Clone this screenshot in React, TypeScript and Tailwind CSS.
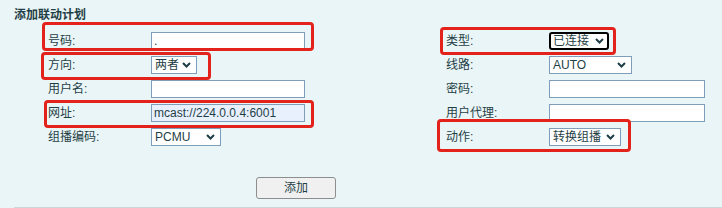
import React from "react";

const font = { fontFamily: '"Liberation Sans", "Noto Sans CJK SC", sans-serif' };

function Chevron() {
  return (
    <svg width="9" height="6" viewBox="0 0 9 6" className="shrink-0">
      <path d="M1 1 L4.5 4.5 L8 1" fill="none" stroke="#1f3f46" strokeWidth="2" />
    </svg>
  );
}

function Select({ value, width, focus }: { value: string; width: string; focus?: boolean }) {
  return (
    <div
      className={`${width} h-[18px] flex items-center justify-between whitespace-nowrap bg-white text-[12px] text-[#1f3f46] ${
        focus ? "border-2 border-black rounded-[3px] pl-[2px] pr-[3px]" : "border border-[#7f9db9] pl-[3px] pr-[5px]"
      }`}
    >
      <span className="leading-none">{value}</span>
      <Chevron />
    </div>
  );
}

function Input({ width, value, filled }: { width: string; value?: string; filled?: boolean }) {
  return (
    <div
      className={`${width} h-[18px] flex items-center border border-[#7f9db9] px-[2px] text-[12px] text-[#1f3f46] whitespace-nowrap ${
        filled ? "bg-[#e8f0fe]" : "bg-white"
      }`}
    >
      {value}
    </div>
  );
}

function Label({ children }: { children: React.ReactNode }) {
  return <div className="text-[12px] text-[#1f3f46] leading-none whitespace-nowrap">{children}</div>;
}

export default function App() {
  return (
    <div className="relative w-[722px] h-[208px] bg-[#eaf5f7] overflow-hidden" style={font}>
      <div className="pl-[14px] pt-[7px] text-[12px] font-bold text-[#1f3f46] leading-[16px]">添加联动计划</div>

      <div className="mt-[6px] pl-[48px] grid grid-cols-[103px_295px_103px_1fr] auto-rows-[24px] items-center">
        <Label>号码:</Label>
        <Input width="w-[154px]" value="." />
        <Label>类型:</Label>
        <Select value="已连接" width="w-[60px]" focus />

        <Label>方向:</Label>
        <Select value="两者" width="w-[46px]" />
        <Label>线路:</Label>
        <Select value="AUTO" width="w-[83px]" />

        <Label>用户名:</Label>
        <Input width="w-[154px]" />
        <Label>密码:</Label>
        <Input width="w-[156px]" />

        <Label>网址:</Label>
        <Input width="w-[154px]" value="mcast://224.0.0.4:6001" filled />
        <Label>用户代理:</Label>
        <Input width="w-[156px]" />

        <Label>组播编码:</Label>
        <Select value="PCMU" width="w-[70px]" />
        <Label>动作:</Label>
        <Select value="转换组播" width="w-[72px]" />
      </div>

      <div className="mt-[26px] pl-[256px]">
        <button className="w-[80px] h-[22px] bg-[#f0f0f0] border border-[#8d8d8d] rounded-[3px] text-[12px] text-[#1f3f46]">
          添加
        </button>
      </div>

      <div className="mt-[8px] ml-[14px] border-b-2 border-[#c9d6da]" />

      {/* annotation boxes */}
      <div className="absolute left-[42px] top-[22px] w-[272px] h-[29px] border-[3px] border-[#e3221b] rounded-[4px]" />
      <div className="absolute left-[41px] top-[52px] w-[170px] h-[28px] border-[3px] border-[#e3221b] rounded-[4px]" />
      <div className="absolute left-[44px] top-[100px] w-[270px] h-[28px] border-[3px] border-[#e3221b] rounded-[4px]" />
      <div className="absolute left-[440px] top-[27px] w-[176px] h-[28px] border-[3px] border-[#e3221b] rounded-[4px]" />
      <div className="absolute left-[437px] top-[119px] w-[194px] h-[33px] border-[3px] border-[#e3221b] rounded-[4px]" />
    </div>
  );
}
